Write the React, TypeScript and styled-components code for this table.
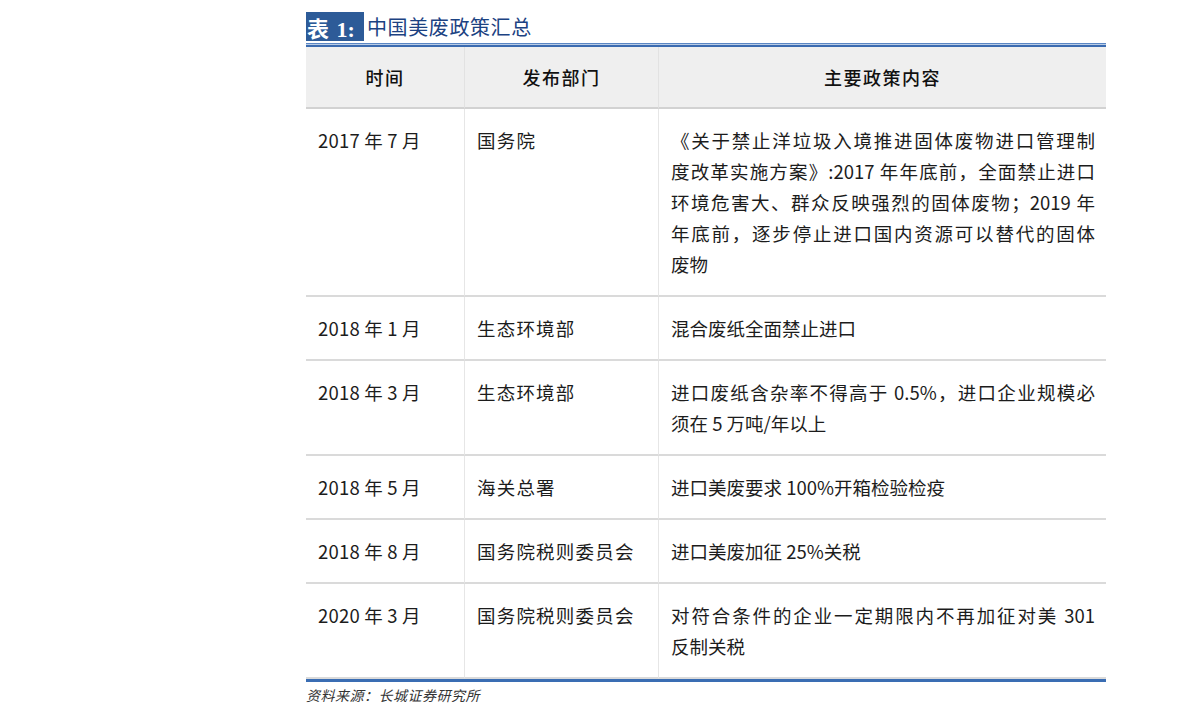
import React from "react";
import styled, { createGlobalStyle } from "styled-components";

const Global = createGlobalStyle`
  html, body { margin: 0; padding: 0; background: #ffffff; }
  body { font-family: "Noto Sans CJK SC", "Liberation Sans", sans-serif; color: #1a1a1a; }
`;

const Page = styled.div`
  width: 1191px;
  height: 723px;
  padding: 12px 0 0 306px;
  box-sizing: border-box;
`;

const Sheet = styled.div`
  width: 800px;
`;

const TitleRow = styled.div`
  display: flex;
  align-items: center;
  height: 29px;
  gap: 3px;
`;

const Label = styled.span`
  display: flex;
  align-items: center;
  height: 29px;
  width: 58px;
  box-sizing: border-box;
  padding: 0 0 0 1px;
  background: #2d5b98;
  color: #ffffff;
  font-family: "Liberation Serif", "Noto Sans CJK SC", serif;
  font-size: 22px;
  font-weight: 700;
  word-spacing: 2px;
`;

const Caption = styled.span`
  color: #1c4282;
  font-family: "Noto Sans CJK SC", sans-serif;
  font-size: 20px;
  letter-spacing: 0.6px;
`;

const TopRule = styled.div`
  margin-top: 2px;
  height: 1px;
  border-top: 1px solid #5a86c4;
  border-bottom: 2px solid #3b6bb0;
  background: #b9cce6;
`;

const Grid = styled.div`
  display: grid;
  grid-template-columns: 159px 194px 447px;
`;

const HeadCell = styled.div<{ $last?: boolean }>`
  height: 60px;
  display: flex;
  align-items: center;
  justify-content: center;
  background: #efefef;
  border-bottom: 2px solid #d2d2d2;
  border-right: ${(p) => (p.$last ? "none" : "1px solid #e2e2e2")};
  font-size: 18px;
  font-weight: 500;
  letter-spacing: 1.5px;
  color: #111111;
`;

const Cell = styled.div<{ $last?: boolean; $tight?: boolean }>`
  padding: 16px 12px 15px 12px;
  border-bottom: 2px solid #dadada;
  border-right: ${(p) => (p.$last ? "none" : "1px solid #e6e6e6")};
  font-size: 18.5px;
  line-height: 31px;
  letter-spacing: ${(p) => (p.$tight ? "0.2px" : "1.2px")};
  color: #1c1c1c;
`;

const ContentCell = styled(Cell)`
  padding-right: 11px;
  letter-spacing: 0;
`;

const Line = styled.span<{ $full?: boolean }>`
  display: block;
  white-space: nowrap;
  text-align: left;
  text-align-last: ${(p) => (p.$full ? "justify" : "left")};
`;

const BottomRule = styled.div`
  height: 3px;
  background: #3a6db3;
`;

const Source = styled.div`
  margin-top: 3px;
  font-size: 14px;
  font-style: italic;
  color: #333333;
  letter-spacing: 0.5px;
`;

type Row = { date: string; dept: string; lines: string[] };

const rows: Row[] = [
  {
    date: "2017 年 7 月",
    dept: "国务院",
    lines: [
      "《关于禁止洋垃圾入境推进固体废物进口管理制",
      "度改革实施方案》:2017 年年底前，全面禁止进口",
      "环境危害大、群众反映强烈的固体废物；2019 年",
      "年底前，逐步停止进口国内资源可以替代的固体",
      "废物",
    ],
  },
  { date: "2018 年 1 月", dept: "生态环境部", lines: ["混合废纸全面禁止进口"] },
  {
    date: "2018 年 3 月",
    dept: "生态环境部",
    lines: ["进口废纸含杂率不得高于 0.5%，进口企业规模必", "须在 5 万吨/年以上"],
  },
  { date: "2018 年 5 月", dept: "海关总署", lines: ["进口美废要求 100%开箱检验检疫"] },
  { date: "2018 年 8 月", dept: "国务院税则委员会", lines: ["进口美废加征 25%关税"] },
  {
    date: "2020 年 3 月",
    dept: "国务院税则委员会",
    lines: ["对符合条件的企业一定期限内不再加征对美 301", "反制关税"],
  },
];

export default function App() {
  return (
    <>
      <Global />
      <Page>
        <Sheet>
          <TitleRow>
            <Label>表 1:</Label>
            <Caption>中国美废政策汇总</Caption>
          </TitleRow>
          <TopRule />
          <Grid>
            <HeadCell>时间</HeadCell>
            <HeadCell>发布部门</HeadCell>
            <HeadCell $last>主要政策内容</HeadCell>
            {rows.map((r) => (
              <React.Fragment key={r.date + r.dept}>
                <Cell $tight>{r.date}</Cell>
                <Cell>{r.dept}</Cell>
                <ContentCell $last>
                  {r.lines.map((l, i) => (
                    <Line key={i} $full={i < r.lines.length - 1}>
                      {l}
                    </Line>
                  ))}
                </ContentCell>
              </React.Fragment>
            ))}
          </Grid>
          <BottomRule />
          <Source>资料来源：长城证券研究所</Source>
        </Sheet>
      </Page>
    </>
  );
}
